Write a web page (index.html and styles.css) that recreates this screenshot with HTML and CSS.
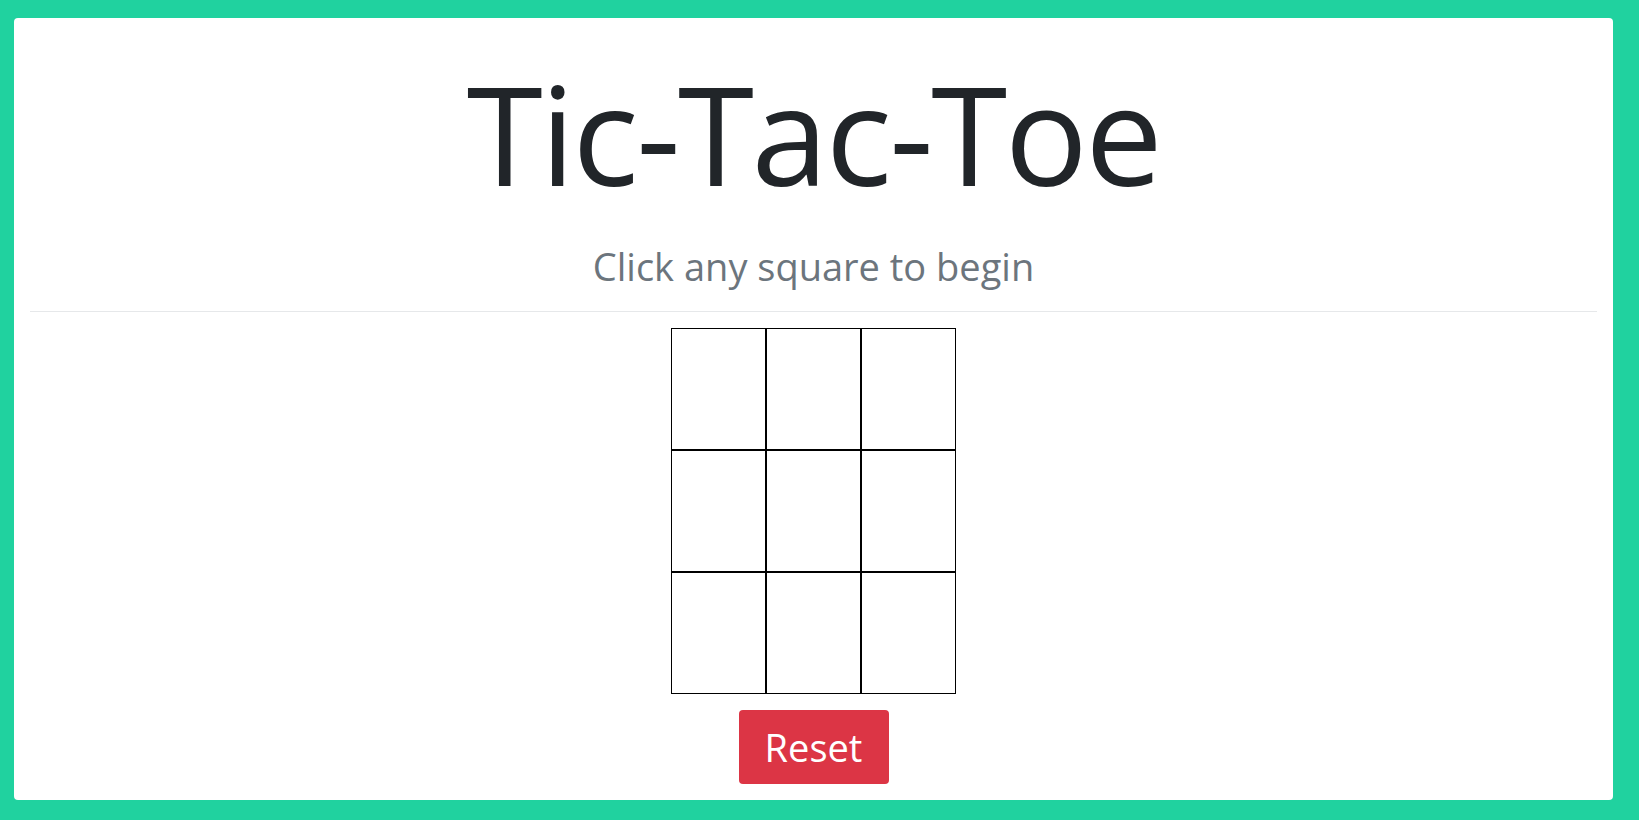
FILE: index.html
```html
<!DOCTYPE html>
<html lang="en">
<head>
<meta charset="utf-8">
<title>Tic-Tac-Toe</title>
<link rel="stylesheet" href="styles.css">
</head>
<body>
<main class="card">
  <header class="head">
    <h1 class="title">Tic-Tac-Toe</h1>
    <p class="status">Click any square to begin</p>
  </header>
  <hr class="rule">
  <section class="game">
    <div class="board">
      <button class="cell" type="button"></button>
      <button class="cell" type="button"></button>
      <button class="cell" type="button"></button>
      <button class="cell" type="button"></button>
      <button class="cell" type="button"></button>
      <button class="cell" type="button"></button>
      <button class="cell" type="button"></button>
      <button class="cell" type="button"></button>
      <button class="cell" type="button"></button>
    </div>
    <button class="reset" type="button">Reset</button>
  </section>
</main>
</body>
</html>
```
FILE: styles.css
```css
* { box-sizing: border-box; }
html, body { margin: 0; height: 100%; }
body {
  background: #20d29f;
  padding: 18px 26px 20px 14px;
  font-family: "Open Sans", "Noto Sans", sans-serif;
}
.card {
  background: #fff;
  border-radius: 4px;
  height: 100%;
  padding: 0 16px;
  display: flex;
  flex-direction: column;
  align-items: stretch;
}
.head {
  display: flex;
  flex-direction: column;
  align-items: center;
}
.title {
  margin: 45px 0 0;
  font-size: 138px;
  font-weight: 400;
  line-height: 1;
  letter-spacing: -2.5px;
  color: #212529;
}
.status {
  margin: 46px 0 0;
  font-size: 38px;
  line-height: 1;
  color: #6c757d;
}
.rule {
  margin: 26px 0 0;
  border: 0;
  border-top: 1px solid #e6e8ea;
}
.game {
  display: flex;
  flex-direction: column;
  align-items: center;
  padding-top: 16px;
}
.board {
  display: grid;
  grid-template-columns: repeat(3, 95px);
  grid-template-rows: repeat(3, 122px);
}
.cell {
  border: 1px solid #000;
  background: #fff;
  padding: 0;
  margin: 0;
}
.reset {
  margin-top: 16px;
  width: 150px;
  height: 74px;
  border: 0;
  border-radius: 4px;
  background: #dc3545;
  color: #fff;
  font-family: inherit;
  font-size: 38px;
  line-height: 1;
}
```
